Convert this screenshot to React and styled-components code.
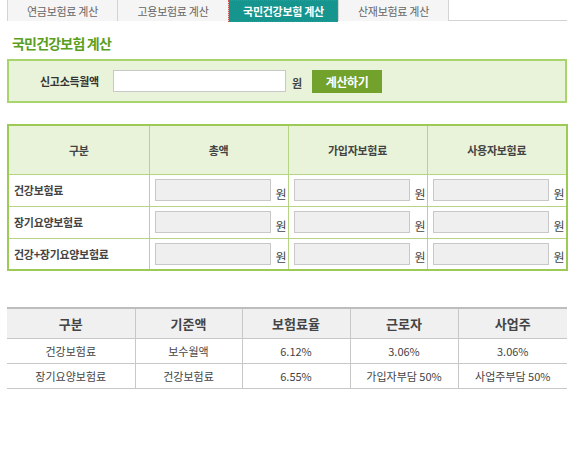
import React from "react";
import styled, { createGlobalStyle } from "styled-components";

const Global = createGlobalStyle`
  html, body { margin: 0; padding: 0; background: #fff; }
  body { font-family: "Noto Sans CJK KR", "Noto Sans", sans-serif; color: #333; }
  * { box-sizing: border-box; }
`;

const Page = styled.div`
  width: 560px;
  margin-left: 7px;
  display: flex;
  flex-direction: column;
`;

const Tabs = styled.div`
  display: flex;
  height: 21px;
  border-bottom: 1px solid #d3d3d3;
`;

const Tab = styled.div`
  width: ${(p) => p.$w}px;
  height: 21px;
  display: flex;
  align-items: center;
  justify-content: center;
  font-size: 11px;
  letter-spacing: -0.3px;
  border-left: 1px solid #d3d3d3;
  ${(p) => (p.$last ? "border-right: 1px solid #d3d3d3;" : "")}
  background: ${(p) => (p.$active ? "#15958e" : "#f5f5f5")};
  color: ${(p) => (p.$active ? "#fff" : "#666")};
  font-weight: ${(p) => (p.$active ? 700 : 400)};
  ${(p) =>
    p.$active
      ? "outline: 1px dotted #e0504a; outline-offset: -1px; margin-bottom: -1px; height: 22px;"
      : ""}
`;

const Title = styled.h2`
  margin: 13px 0 0 5px;
  height: 25px;
  font-size: 14px;
  font-weight: 700;
  color: #5b9e1d;
  letter-spacing: -0.8px;
  line-height: 18px;
`;

const InputBox = styled.div`
  height: 44px;
  border: 2px solid #a8d46c;
  background: #e8f3da;
  display: flex;
  align-items: center;
  padding-left: 31px;
`;

const Label = styled.span`
  font-size: 11px;
  font-weight: 700;
  color: #333;
  width: 73px;
  letter-spacing: -0.3px;
`;

const TextInput = styled.input`
  width: 173px;
  height: 22px;
  border: 1px solid #c8c8c8;
  background: ${(p) => (p.$gray ? "#efefef" : "#fff")};
  padding: 0 4px;
  font-family: inherit;
  outline: none;
`;

const Won = styled.span`
  font-size: ${(p) => (p.$bold ? "11px" : "12px")};
  font-weight: ${(p) => (p.$bold ? 700 : 400)};
  color: #444;
  margin-left: ${(p) => p.$ml || 5}px;
  padding-top: ${(p) => (p.$bold ? 4 : 6)}px;
`;

const Button = styled.button`
  margin-left: 10px;
  width: 70px;
  height: 23px;
  border: none;
  background: #72a22b;
  color: #fff;
  font-family: inherit;
  font-size: 12px;
  font-weight: 700;
  padding: 0;
  letter-spacing: -0.3px;
`;

const CalcTable = styled.table`
  margin-top: 21px;
  width: 559px;
  border-collapse: collapse;
  border: 2px solid #9dc956;
  table-layout: fixed;
`;

const HeadCell = styled.th`
  height: 49px;
  background: #e8f3da;
  border: 1px solid #b5d585;
  font-size: 11px;
  font-weight: 700;
  color: #444;
  letter-spacing: -0.3px;
`;

const RowLabel = styled.td`
  height: 32px;
  border: 1px solid #b5d585;
  font-size: 11px;
  font-weight: 700;
  color: #444;
  padding-left: 5px;
  letter-spacing: -0.3px;
`;

const ValueCell = styled.td`
  border: 1px solid #b5d585;
  padding: 0 0 0 5px;
`;

const ValueWrap = styled.div`
  display: flex;
  align-items: center;
`;

const ValueInput = styled(TextInput)`
  width: 116px;
`;

const RateTable = styled.table`
  margin-top: 36px;
  width: 560px;
  border-collapse: collapse;
  table-layout: fixed;
  border-top: 2px solid #bdbdbd;
`;

const RateHead = styled.th`
  height: 30px;
  background: #f0f0f0;
  border-bottom: 1px solid #c8c8c8;
  border-left: ${(p) => (p.$first ? "none" : "1px solid #c8c8c8")};
  font-size: 13px;
  font-weight: 700;
  color: #444;
`;

const RateCell = styled.td`
  height: 25px;
  border-bottom: 1px solid #c8c8c8;
  border-left: ${(p) => (p.$first ? "none" : "1px solid #c8c8c8")};
  font-size: 11px;
  color: #444;
  text-align: center;
`;

const tabs = [
  { label: "연금보험료 계산", w: 110 },
  { label: "고용보험료 계산", w: 111 },
  { label: "국민건강보험 계산", w: 110, active: true },
  { label: "산재보험료 계산", w: 111, last: true },
];

const rows = ["건강보험료", "장기요양보험료", "건강+장기요양보험료"];

const rates = [
  ["건강보험료", "보수월액", "6.12%", "3.06%", "3.06%"],
  ["장기요양보험료", "건강보험료", "6.55%", "가입자부담 50%", "사업주부담 50%"],
];

export default function App() {
  return (
    <>
      <Global />
      <Page>
        <Tabs>
          {tabs.map((t) => (
            <Tab key={t.label} $w={t.w} $active={t.active} $last={t.last}>
              {t.label}
            </Tab>
          ))}
        </Tabs>
        <Title>국민건강보험 계산</Title>
        <InputBox>
          <Label>신고소득월액</Label>
          <TextInput />
          <Won $bold $ml={6}>원</Won>
          <Button>계산하기</Button>
        </InputBox>
        <CalcTable>
          <colgroup>
            <col style={{ width: 141 }} />
            <col style={{ width: 139 }} />
            <col style={{ width: 139 }} />
            <col style={{ width: 140 }} />
          </colgroup>
          <thead>
            <tr>
              <HeadCell>구분</HeadCell>
              <HeadCell>총액</HeadCell>
              <HeadCell>가입자보험료</HeadCell>
              <HeadCell>사용자보험료</HeadCell>
            </tr>
          </thead>
          <tbody>
            {rows.map((r) => (
              <tr key={r}>
                <RowLabel>{r}</RowLabel>
                {[0, 1, 2].map((i) => (
                  <ValueCell key={i}>
                    <ValueWrap>
                      <ValueInput $gray readOnly />
                      <Won>원</Won>
                    </ValueWrap>
                  </ValueCell>
                ))}
              </tr>
            ))}
          </tbody>
        </CalcTable>
        <RateTable>
          <colgroup>
            <col style={{ width: 128 }} />
            <col style={{ width: 107 }} />
            <col style={{ width: 108 }} />
            <col style={{ width: 108 }} />
            <col style={{ width: 109 }} />
          </colgroup>
          <thead>
            <tr>
              {["구분", "기준액", "보험료율", "근로자", "사업주"].map((h, i) => (
                <RateHead key={h} $first={i === 0}>
                  {h}
                </RateHead>
              ))}
            </tr>
          </thead>
          <tbody>
            {rates.map((r) => (
              <tr key={r[0]}>
                {r.map((c, i) => (
                  <RateCell key={i} $first={i === 0}>
                    {c}
                  </RateCell>
                ))}
              </tr>
            ))}
          </tbody>
        </RateTable>
      </Page>
    </>
  );
}
